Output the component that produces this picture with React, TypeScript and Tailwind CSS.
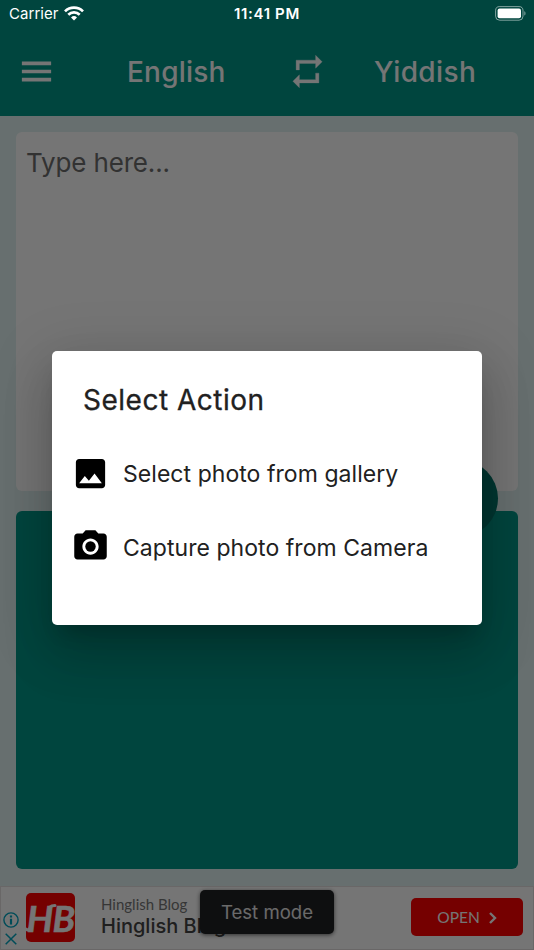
import React from 'react';
import { MdImage, MdPhotoCamera } from 'react-icons/md';

const StatusBar: React.FC = () => (
  <div className="absolute inset-x-0 top-0 z-30 flex h-7 items-center justify-between pl-[9px] pr-[8px] text-white">
    <div className="flex w-[118px] items-center gap-[5px]">
      <span className="text-[15px] tracking-[0.05px]">Carrier</span>
      <svg width="20" height="15" viewBox="0 0 20 15" className="-mt-[2px]" fill="none" stroke="currentColor" strokeWidth="2.7">
        <path d="M1 5.4a12.8 12.8 0 0 1 18 0" />
        <path d="M4.3 8.8a8.1 8.1 0 0 1 11.4 0" />
        <path d="M10 14.6l-3-3.1a4.3 4.3 0 0 1 6 0z" fill="currentColor" stroke="none" />
      </svg>
    </div>
    <span className="pt-px text-[15px] font-semibold tracking-[0.65px]">11:41 PM</span>
    <div className="flex w-[119px] justify-end">
      <svg width="31" height="15" viewBox="0 0 31 15" className="-mt-[2px]">
        <rect x="0.6" y="0.6" width="27.4" height="13.6" rx="4" fill="none" stroke="#fff" strokeOpacity="0.5" />
        <rect x="2.6" y="2.6" width="23.4" height="9.6" rx="2" fill="#fff" />
        <path d="M29.3 5.2c1.6.6 1.6 3.8 0 4.4z" fill="#fff" fillOpacity="0.5" />
      </svg>
    </div>
  </div>
);

const Header: React.FC = () => (
  <header className="flex h-[116px] shrink-0 items-center bg-[#009688] pt-7 text-white">
    <button className="mb-[2px] ml-[17px] flex w-[39px] justify-center">
      <svg width="39" height="39" viewBox="0 0 24 24" fill="none" stroke="currentColor" strokeWidth="2.2">
        <path d="M3 7h18M3 12h18M3 17h18" />
      </svg>
    </button>
    <span className="ml-[71px] w-[100px] text-[28px] font-medium leading-none tracking-[0.2px]">English</span>
    <button className="mb-[2px] ml-[61px] flex w-[39px] justify-center">
      <svg width="39" height="39" viewBox="0 0 24 24" fill="currentColor" stroke="currentColor" strokeWidth="0.2">
        <path d="M7 7h10v3l4-4-4-4v3H5v6h2V7zm10 10H7v-3l-4 4 4 4v-3h12v-6h-2v4z" />
      </svg>
    </button>
    <span className="ml-[47px] text-[28px] font-medium leading-none tracking-[0.4px]">Yiddish</span>
  </header>
);

const AdBanner: React.FC = () => (
  <div className="relative flex h-[64px] shrink-0 items-center border border-[#e4e0e0] bg-white pb-[2px]">
    <div className="ml-[2px] mt-[23px] flex w-[16px] flex-col items-center gap-[5px] text-[#00a5c0]">
      <svg width="16" height="16" viewBox="0 0 16 16" fill="none" stroke="currentColor" strokeWidth="1.4">
        <circle cx="8" cy="8" r="7.1" />
        <path d="M8 3.5v2M8 6.8v5.6" strokeWidth="2.2" />
      </svg>
      <svg width="12" height="12" viewBox="0 0 12 12" stroke="currentColor" strokeWidth="1.5">
        <path d="M.7.7l10.6 10.6M11.3.7L.7 11.3" />
      </svg>
    </div>
    <div className="relative ml-[7px] flex size-[49px] items-center justify-center overflow-hidden rounded-[5px] bg-[#ff0000] text-white">
      <span className="font-['Lato',sans-serif] text-[37px] font-bold italic leading-none tracking-[-1px] [-webkit-text-stroke:0.5px]">HB</span>
      <svg viewBox="0 0 49 49" className="absolute inset-0" fill="none" stroke="currentColor" strokeWidth="3" strokeLinecap="round">
        <path d="M0 36c1 1.500 3 1 4-1" />
        <path d="M24 14c1-1 3-1.500 5-1.500" />
      </svg>
    </div>
    <div className="ml-[26px] flex flex-col">
      <span className="font-['Lato',sans-serif] text-[15px] leading-[18px] text-[#777]">Hinglish Blog</span>
      <span className="text-[20px] font-medium leading-[26px] text-[#444]">Hinglish Blog</span>
    </div>
    <button className="ml-auto mr-[10px] flex h-[38px] w-[112px] items-center justify-center gap-[9px] rounded-[5px] bg-[#ff0000] pt-px text-white">
      <span className="font-['Lato',sans-serif] text-[15.5px]">OPEN</span>
      <svg width="8" height="12" viewBox="0 0 8 12" fill="none" stroke="currentColor" strokeWidth="2.4">
        <path d="M1 1l5 5-5 5" />
      </svg>
    </button>
    <div className="absolute left-[199px] top-[3px] flex h-[44px] w-[134px] items-center justify-center rounded-[5px] bg-[#202124] pt-px text-[18.6px] text-[#e6e6e6] shadow-[0_1px_4px_rgba(0,0,0,0.6)]">
      Test mode
    </div>
  </div>
);

const ActionDialog: React.FC = () => (
  <div className="flex h-[274px] w-[430px] flex-col rounded-[5px] bg-white text-[#212121] shadow-[0_14px_19px_-9px_rgba(0,0,0,0.2),0_31px_49px_4px_rgba(0,0,0,0.14),0_12px_59px_10px_rgba(0,0,0,0.12)]">
    <h2 className="ml-[31px] mt-[31px] text-[28px] font-normal leading-[36px] tracking-[0.5px] [-webkit-text-stroke:0.3px]">Select Action</h2>
    <button className="ml-[19px] mt-[36px] flex h-[39px] items-center gap-[13px]">
      <MdImage size={39} className="text-black" />
      <span className="pt-[2px] text-[23px] tracking-[0.05px]">Select photo from gallery</span>
    </button>
    <button className="ml-[19px] mt-[34px] flex h-[39px] items-center gap-[13px]">
      <MdPhotoCamera size={39} className="text-black" />
      <span className="pt-[3px] text-[23px] tracking-[0.05px]">Capture photo from Camera</span>
    </button>
  </div>
);

const App: React.FC = () => {
  return (
    <div className="relative flex h-[950px] w-[534px] flex-col overflow-hidden bg-[#e0f2f1] font-['Inter',sans-serif]">
      <StatusBar />
      <Header />
      <main className="flex flex-1 flex-col gap-5 px-4 pb-4 pt-4">
        <div className="relative h-[359px] rounded-[6px] bg-white px-[10px] pt-[14px] text-[26px] leading-[34px] tracking-[-0.15px] text-[#6e6e6e]">
          Type here...
          <div className="absolute -bottom-[46px] right-[20.5px] size-[77px] rounded-full bg-[#00766b]" />
        </div>
        <div className="h-[358px] rounded-[6px] bg-[#009688]" />
      </main>
      <AdBanner />
      <div className="absolute inset-0 z-20 flex items-center justify-center bg-black/54 pt-[26px]">
        <ActionDialog />
      </div>
    </div>
  );
};

export default App;
